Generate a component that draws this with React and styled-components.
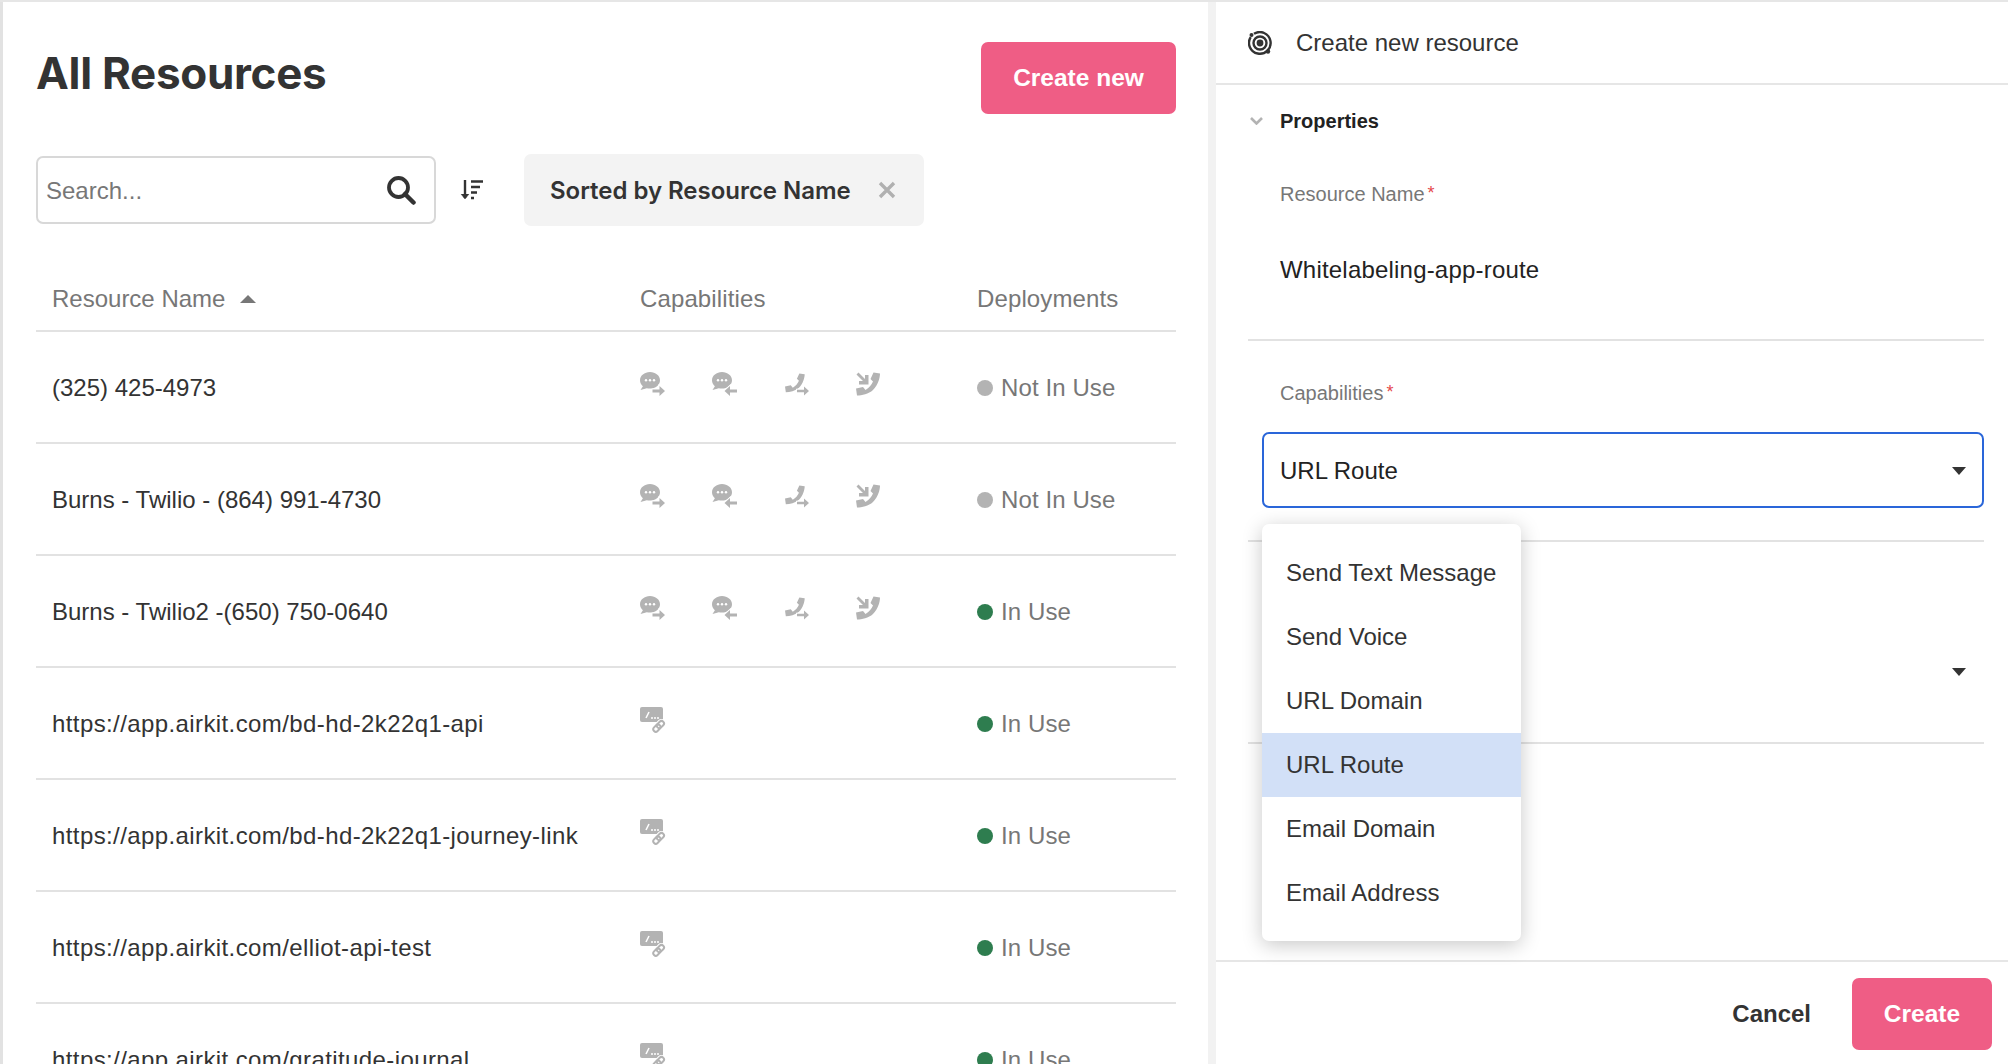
import React from 'react';
import styled, { createGlobalStyle } from 'styled-components';

const sans = '"Liberation Sans", Arial, sans-serif';

const GlobalStyle = createGlobalStyle`
  html, body {
    margin: 0;
    padding: 0;
    height: 100%;
    overflow: hidden;
    background: #fff;
    font-family: ${sans};
  }
  * { box-sizing: border-box; }
`;

const Page = styled.div`
  display: flex;
  width: 2008px;
  height: 1064px;
  border-top: 2px solid #e6e6e6;
  overflow: hidden;
  color: #333;
`;

const ListPanel = styled.section`
  width: 1216px;
  flex: none;
  border-left: 3px solid #e2e2e2;
  border-right: 8px solid #f2f2f2;
  padding: 40px 32px 0 33px;
  overflow: hidden;
`;

const TitleRow = styled.div`
  display: flex;
  justify-content: space-between;
  align-items: center;
  height: 72px;
`;

const Title = styled.h1`
  margin: 0 0 10px;
  font: 700 44px Inter, ${sans};
  letter-spacing: -0.3px;
  color: #333;
`;

const PinkButton = styled.button`
  border: none;
  border-radius: 7px;
  background: #ef5d85;
  color: #fff;
  font: 700 24.5px ${sans};
  height: 72px;
  width: ${(props) => props.$width}px;
`;

const Toolbar = styled.div`
  display: flex;
  align-items: center;
  margin-top: 40px;
  height: 72px;
`;

const SearchBox = styled.div`
  display: flex;
  align-items: center;
  justify-content: space-between;
  width: 400px;
  height: 68px;
  border: 2px solid #d8d8d8;
  border-radius: 7px;
  padding: 0 18px 0 8px;
  font-size: 24px;
  color: #777;
`;

const SearchText = styled.span`
  padding-top: 2px;
`;

const SortButton = styled.div`
  display: flex;
  margin: 0 40px 0 24px;
`;

const Chip = styled.div`
  display: flex;
  align-items: center;
  justify-content: space-between;
  width: 400px;
  height: 72px;
  padding: 0 28px 0 26px;
  border-radius: 7px;
  background: #f3f3f3;
  font: 600 24px Inter, ${sans};
  letter-spacing: -0.03px;
`;

const Grid = styled.div`
  display: grid;
  grid-template-columns: 604px 337px 1fr;
  align-items: center;
  border-bottom: 2px solid #e2e2e2;
`;

const HeaderRow = styled(Grid)`
  margin-top: 39px;
  height: 67px;
  padding-top: 2px;
  font-size: 24px;
  letter-spacing: 0.12px;
  color: #777;
`;

const Row = styled(Grid)`
  height: 112px;
  padding-top: 2px;
  font-size: 24px;
`;

const NameCell = styled.div`
  display: flex;
  align-items: center;
  gap: 15px;
  padding-left: 16px;
  letter-spacing: ${(props) => (props.$url ? '0.4px' : 'normal')};
`;

const SortCaret = styled.span`
  width: 0;
  height: 0;
  border-left: 8px solid transparent;
  border-right: 8px solid transparent;
  border-bottom: 8px solid #777;
`;

const IconCell = styled.div`
  display: flex;
  gap: 47px;
  margin-bottom: 8px;
`;

const Status = styled.div`
  display: flex;
  align-items: center;
  gap: 8px;
  letter-spacing: 0.1px;
  color: #777;
`;

const Dot = styled.span`
  width: 16px;
  height: 16px;
  border-radius: 50%;
  background: ${(props) => (props.$active ? '#2e7d4f' : '#b3b3b3')};
`;

const FormPanel = styled.section`
  flex: 1;
  display: flex;
  flex-direction: column;
  min-width: 0;
`;

const FormHeader = styled.header`
  display: flex;
  align-items: center;
  gap: 24px;
  height: 83px;
  padding-left: 32px;
  border-bottom: 2px solid #e6e6e6;
  font-size: 24px;
  color: #333;
`;

const FormBody = styled.div`
  flex: 1;
  min-height: 0;
`;

const SectionTitle = styled.div`
  display: flex;
  align-items: center;
  gap: 17px;
  padding: 22px 0 7px 34px;
  line-height: 28px;
  font-size: 20px;
  font-weight: 700;
  color: #222;
`;

const Field = styled.div`
  margin: 0 24px 0 32px;
  padding: 40px 0 ${(props) => props.$bottom}px 14px;
  border-bottom: 2px solid #e2e2e2;
`;

const Label = styled.div`
  margin: 0 0 27px 18px;
  line-height: 24px;
  font-size: 20px;
  color: #777;
`;

const Required = styled.span`
  margin-left: 3px;
  font-size: 18px;
  vertical-align: 2px;
  line-height: 0;
  color: #e5484d;
`;

const Value = styled.div`
  display: flex;
  align-items: center;
  height: 74px;
  padding-left: 18px;
  font-size: 24px;
  letter-spacing: 0.2px;
  color: #222;
`;

const SelectWrap = styled.div`
  position: relative;
`;

const Select = styled.div`
  display: flex;
  align-items: center;
  justify-content: space-between;
  height: 76px;
  padding: 1px 16px 0;
  border: 2px solid ${(props) => (props.$focused ? '#2a66d9' : 'transparent')};
  border-radius: 7px;
  font-size: 24px;
  color: #222;
`;

const SelectCaret = styled.span`
  width: 0;
  height: 0;
  margin-left: auto;
  border-left: 7px solid transparent;
  border-right: 7px solid transparent;
  border-top: 8px solid #333;
`;

const Menu = styled.ul`
  position: absolute;
  top: calc(100% + 16px);
  left: 0;
  z-index: 5;
  width: 259px;
  margin: 0;
  padding: 17px 0 16px;
  list-style: none;
  border-radius: 7px;
  background: #fff;
  box-shadow: 0 4px 20px rgba(0, 0, 0, 0.22);
`;

const MenuItem = styled.li`
  display: flex;
  align-items: center;
  height: 64px;
  padding-left: 24px;
  font-size: 24px;
  color: #333;
  background: ${(props) => (props.$selected ? '#d2e0f7' : 'transparent')};
`;

const Footer = styled.footer`
  display: flex;
  align-items: center;
  justify-content: flex-end;
  gap: 41px;
  height: 104px;
  padding: 1px 16px 0 0;
  border-top: 2px solid #e6e6e6;
`;

const CancelButton = styled.button`
  border: none;
  padding: 0;
  background: none;
  font: 700 24px ${sans};
  color: #333;
`;

const grey = '#b3b3b3';

const handset =
  'M17.500.500L24 1.500C24 6 22 13 17 18 12.500 22 6 23.500 1 23.500L0 16.500 7 15l2.500 3C13 16 15.500 13 17 9.500L14.500 7z';

function Bubble() {
  return (
    <>
      <path
        d="M10 0C4.500 0 0 3.600 0 8.300c0 2.400 1.100 4.400 2.900 5.900L.5 18l6.300-1.800c1 .3 2.100.4 3.200.4 5.500 0 10-3.600 10-8.300S15.500 0 10 0z"
        fill={grey}
      />
      <circle cx="6" cy="8.300" r="1.200" fill="#fff" />
      <circle cx="10" cy="8.300" r="1.200" fill="#fff" />
      <circle cx="14" cy="8.300" r="1.200" fill="#fff" />
    </>
  );
}

const arrowRight = 'M12.500 17.500h7V14l5.500 5-5.500 5v-3.500h-7z';
const arrowLeft = 'M25 17.500h-7V14l-5.500 5 5.500 5v-3.500h7z';

function Arrow({ d }) {
  return <path d={d} fill={grey} stroke="#fff" strokeWidth="2" paintOrder="stroke" />;
}

function ChatOutIcon() {
  return (
    <svg width="25" height="24" viewBox="0 0 25 24">
      <Bubble />
      <Arrow d={arrowRight} />
    </svg>
  );
}

function ChatInIcon() {
  return (
    <svg width="25" height="24" viewBox="0 0 25 24">
      <Bubble />
      <Arrow d={arrowLeft} />
    </svg>
  );
}

function CallOutIcon() {
  return (
    <svg width="25" height="24" viewBox="0 0 25 24">
      <g transform="translate(1 1) scale(0.82)">
        <path d={handset} fill={grey} />
      </g>
      <Arrow d="M13 17.800h7v-3.300l5 4.500-5 4.500v-3.300h-7z" />
    </svg>
  );
}

function CallInIcon() {
  return (
    <svg width="25" height="24" viewBox="0 0 25 24">
      <path d={handset} fill={grey} />
      <path d="M.5 2.500l2-2L9 7V3h3.500v9.500H3V9h4z" fill={grey} />
    </svg>
  );
}

function LinkIcon() {
  return (
    <svg width="26" height="26" viewBox="0 0 26 26">
      <rect x="0" y="0" width="23" height="15" rx="2" fill={grey} />
      <path d="M6 11l3-6" stroke="#fff" strokeWidth="1.600" />
      <circle cx="12" cy="11" r="1" fill="#fff" />
      <circle cx="15" cy="11" r="1" fill="#fff" />
      <circle cx="18" cy="11" r="1" fill="#fff" />
      <g fill="none" transform="rotate(-45 19 19)">
        <rect x="12" y="16.500" width="8" height="5" rx="2.500" stroke="#fff" strokeWidth="4" />
        <rect x="17" y="16.500" width="8" height="5" rx="2.500" stroke="#fff" strokeWidth="4" />
        <rect x="12" y="16.500" width="8" height="5" rx="2.500" stroke={grey} strokeWidth="2" />
        <rect x="17" y="16.500" width="8" height="5" rx="2.500" stroke={grey} strokeWidth="2" />
      </g>
    </svg>
  );
}

function SearchIcon() {
  return (
    <svg width="30" height="30" viewBox="0 0 30 30" fill="none" stroke="#333" strokeWidth="3.800">
      <circle cx="12.500" cy="12.500" r="9.500" />
      <path d="M19 19l8.500 8.500" strokeWidth="4.500" strokeLinecap="round" />
    </svg>
  );
}

function SortIcon() {
  return (
    <svg width="24" height="24" viewBox="0 0 24 24" fill="none" stroke="#333" strokeWidth="2.400">
      <path d="M5 2v18" />
      <path d="M1 16l4 5 4-5" fill="#333" strokeWidth="0.500" />
      <path d="M11 3.500h12M11 9h9M11 14.500h6M11 20h3" />
    </svg>
  );
}

function CloseIcon() {
  return (
    <svg width="18" height="18" viewBox="0 0 18 18" stroke="#b0b0b0" strokeWidth="3.400">
      <path d="M2 2l14 14M16 2L2 16" />
    </svg>
  );
}

function TargetIcon() {
  return (
    <svg width="24" height="24" viewBox="0 0 24 24" fill="none" stroke="#333">
      <path d="M6 2.800a10.800 10.800 0 1 1-3.300 3.300" strokeWidth="2.400" />
      <circle cx="12" cy="12" r="6.500" strokeWidth="2.400" />
      <circle cx="12" cy="12" r="3.400" fill="#333" strokeWidth="0" />
      <circle cx="3.500" cy="4" r="2" fill="#333" strokeWidth="0" />
      <circle cx="20" cy="20.500" r="2.200" fill="#333" strokeWidth="0" />
    </svg>
  );
}

function Chevron() {
  return (
    <svg width="13" height="8" viewBox="0 0 13 8" fill="none" stroke="#b3b3b3" strokeWidth="2.600">
      <path d="M1 1l5.500 5.500L12 1" />
    </svg>
  );
}

const phoneIcons = (
  <>
    <ChatOutIcon />
    <ChatInIcon />
    <CallOutIcon />
    <CallInIcon />
  </>
);

const rows = [
  { name: '(325) 425-4973', phone: true, active: false },
  { name: 'Burns - Twilio - (864) 991-4730', phone: true, active: false },
  { name: 'Burns - Twilio2 -(650) 750-0640', phone: true, active: true },
  { name: 'https://app.airkit.com/bd-hd-2k22q1-api', active: true },
  { name: 'https://app.airkit.com/bd-hd-2k22q1-journey-link', active: true },
  { name: 'https://app.airkit.com/elliot-api-test', active: true },
  { name: 'https://app.airkit.com/gratitude-journal', active: true },
];

const options = ['Send Text Message', 'Send Voice', 'URL Domain', 'URL Route', 'Email Domain', 'Email Address'];

export default function App() {
  return (
    <>
      <GlobalStyle />
      <Page>
        <ListPanel>
          <TitleRow>
            <Title>All Resources</Title>
            <PinkButton $width={195}>Create new</PinkButton>
          </TitleRow>
          <Toolbar>
            <SearchBox>
              <SearchText>Search...</SearchText>
              <SearchIcon />
            </SearchBox>
            <SortButton>
              <SortIcon />
            </SortButton>
            <Chip>
              Sorted by Resource Name
              <CloseIcon />
            </Chip>
          </Toolbar>
          <HeaderRow>
            <NameCell>
              Resource Name
              <SortCaret />
            </NameCell>
            <div>Capabilities</div>
            <div>Deployments</div>
          </HeaderRow>
          {rows.map((row) => (
            <Row key={row.name}>
              <NameCell $url={!row.phone}>{row.name}</NameCell>
              <IconCell>{row.phone ? phoneIcons : <LinkIcon />}</IconCell>
              <Status>
                <Dot $active={row.active} />
                {row.active ? 'In Use' : 'Not In Use'}
              </Status>
            </Row>
          ))}
        </ListPanel>
        <FormPanel>
          <FormHeader>
            <TargetIcon />
            Create new resource
          </FormHeader>
          <FormBody>
            <SectionTitle>
              <Chevron />
              Properties
            </SectionTitle>
            <Field $bottom={32}>
              <Label>
                Resource Name<Required>*</Required>
              </Label>
              <Value>Whitelabeling-app-route</Value>
            </Field>
            <Field $bottom={32}>
              <Label>
                Capabilities<Required>*</Required>
              </Label>
              <SelectWrap>
                <Select $focused>
                  URL Route
                  <SelectCaret />
                </Select>
                <Menu>
                  {options.map((option) => (
                    <MenuItem key={option} $selected={option === 'URL Route'}>
                      {option}
                    </MenuItem>
                  ))}
                </Menu>
              </SelectWrap>
            </Field>
            <Field $bottom={33}>
              <Label>&nbsp;</Label>
              <Select>
                <SelectCaret />
              </Select>
            </Field>
          </FormBody>
          <Footer>
            <CancelButton>Cancel</CancelButton>
            <PinkButton $width={140}>Create</PinkButton>
          </Footer>
        </FormPanel>
      </Page>
    </>
  );
}
